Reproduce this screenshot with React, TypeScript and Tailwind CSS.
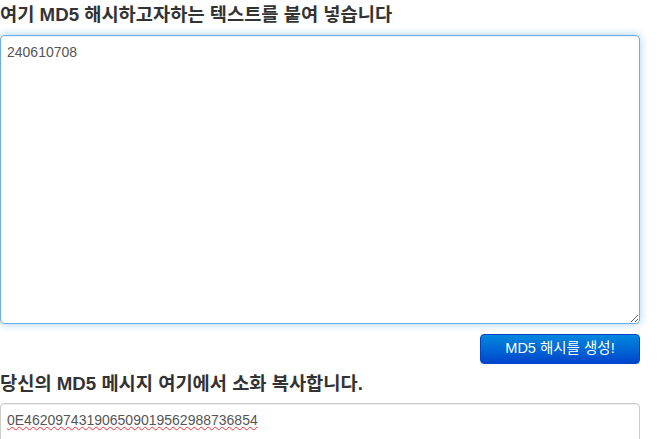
export default function App() {
  return (
    <div className="w-[657px] h-[439px] overflow-hidden bg-white font-['Liberation_Sans','Noto_Sans_CJK_KR',sans-serif] text-[#333]">
      <div className="w-[640px]">
        <h3 className="text-[18.7px] font-bold leading-[20px] pt-[5px] mb-[10px]">여기 MD5 해시하고자하는 텍스트를 붙여 넣습니다</h3>
        <textarea
          defaultValue="240610708"
          className="block w-full h-[289px] rounded-[4px] border border-[#66afe9] shadow-[inset_0_1px_1px_rgba(0,0,0,0.075),0_0_8px_rgba(102,175,233,0.6)] px-[6px] py-[6px] text-[14px] leading-[20px] text-[#555] outline-none resize-y"
        />
        <div className="flex justify-end mt-[10px]">
          <button className="w-[160px] h-[30px] rounded-[4px] bg-gradient-to-b from-[#0088dd] to-[#0044cc] border border-[#0044cc] text-white text-[14.5px]">
            MD5 해시를 생성!
          </button>
        </div>
        <h3 className="text-[18.7px] font-bold leading-[20px] mt-[10px] mb-[9px]">당신의 MD5 메시지 여기에서 소화 복사합니다.</h3>
        <textarea
          defaultValue="0E462097431906509019562988736854"
          className="block w-full h-[100px] rounded-[4px] border border-[#ccc] shadow-[inset_0_1px_1px_rgba(0,0,0,0.075)] px-[6px] py-[6px] text-[14px] leading-[20px] text-[#555] outline-none underline decoration-wavy decoration-red-500 decoration-1"
        />
      </div>
    </div>
  )
}
